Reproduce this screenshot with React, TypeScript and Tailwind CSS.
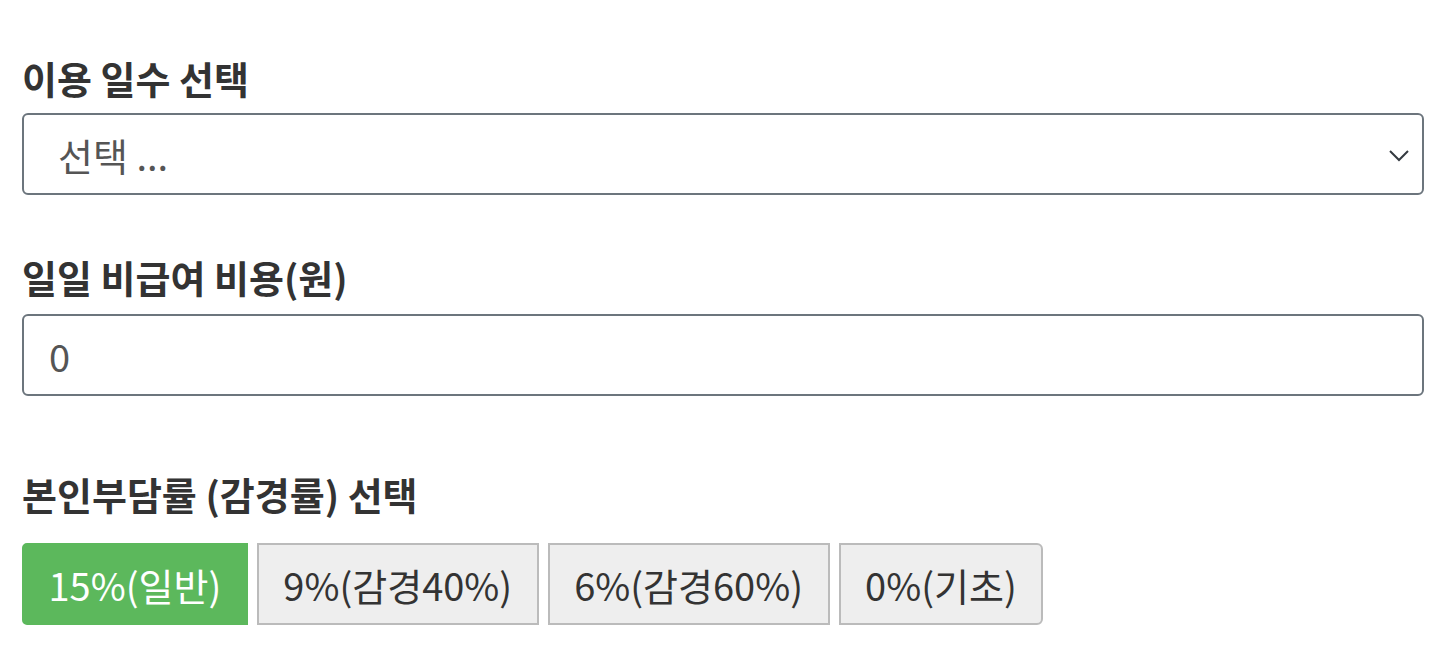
export default function App() {
  const options = ["15%(일반)", "9%(감경40%)", "6%(감경60%)", "0%(기초)"]
  return (
    <div className="min-h-screen bg-white px-[22px] pt-[56px] font-['Noto_Sans_CJK_KR','Noto_Sans',sans-serif] text-[#333]">
      <div className="mb-[13px] text-[38px] font-bold leading-[44px]">이용 일수 선택</div>
      <div className="relative flex h-[82px] w-[1402px] items-center rounded-[6px] border-2 border-[#6c757d] pl-[34px] text-[38px] text-[#555]">
        선택 ...
        <svg className="absolute right-[12px] top-[34px]" width="22" height="14" viewBox="0 0 22 14" fill="none" stroke="#343a40" strokeWidth="2">
          <path d="M2 2l9 9 9-9" />
        </svg>
      </div>
      <div className="mb-[15px] mt-[60px] text-[38px] font-bold leading-[44px]">일일 비급여 비용(원)</div>
      <div className="flex h-[82px] w-[1402px] items-center rounded-[6px] border-2 border-[#6c757d] pl-[25px] text-[38px] text-[#555]">
        0
      </div>
      <div className="mb-[27px] mt-[76px] text-[38px] font-bold leading-[44px]">본인부담률 (감경률) 선택</div>
      <div className="flex gap-[9px]">
        {options.map((o, i) => (
          <div
            key={o}
            className={
              i === 0
                ? "flex h-[82px] items-center rounded-l-[5px] border-2 border-[#5cb85c] bg-[#5cb85c] px-[24.5px] text-[38px] text-white"
                : i === options.length - 1
                ? "flex h-[82px] items-center rounded-r-[6px] border-2 border-[#bbb] bg-[#eee] px-[24.5px] text-[38px] text-[#333]"
                : "flex h-[82px] items-center border-2 border-[#bbb] bg-[#eee] px-[24.5px] text-[38px] text-[#333]"
            }
          >
            {o}
          </div>
        ))}
      </div>
    </div>
  )
}
